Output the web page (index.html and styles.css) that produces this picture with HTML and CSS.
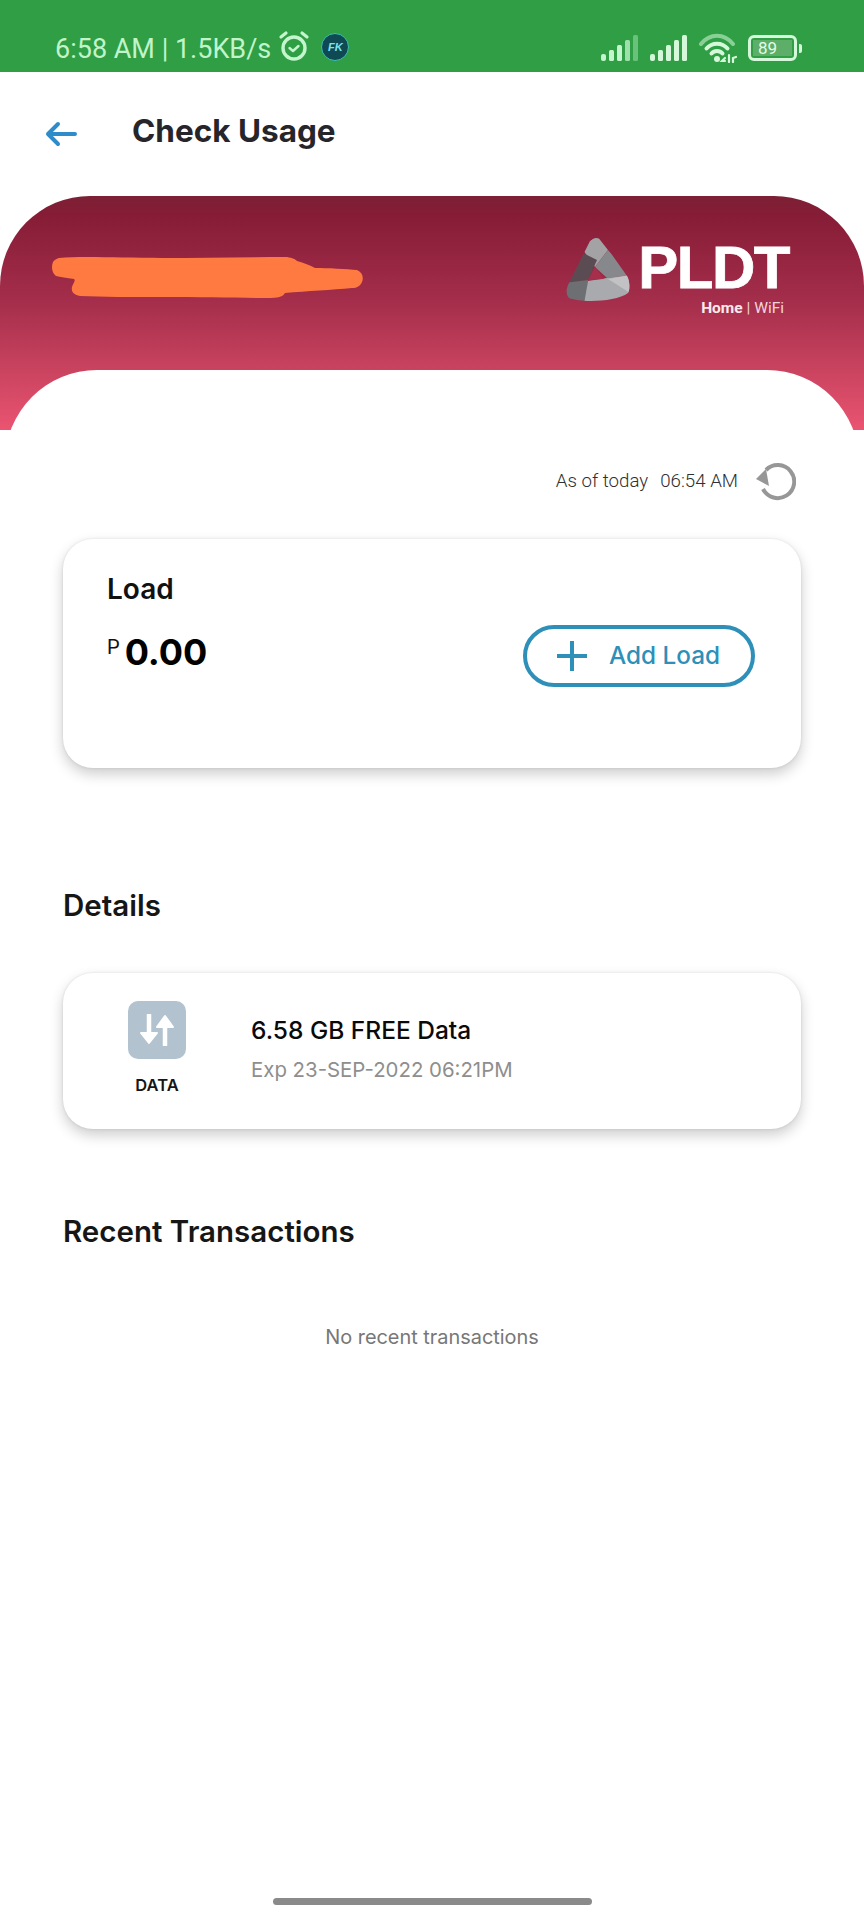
FILE: index.html
```html
<!DOCTYPE html>
<html lang="en">

<head>
  <meta charset="UTF-8" />
  <meta name="viewport" content="width=device-width, initial-scale=1.0" />
  <title>Check Usage</title>
  <link rel="stylesheet" href="styles.css">
</head>

<body>
  <div class="status-bar">
    <div class="status-left">
      <span class="status-text">6:58 AM | 1.5KB/s</span>
      <svg class="alarm-icon" width="32" height="32" viewBox="0 0 32 32" fill="none" stroke="#c4f5cd" stroke-linecap="round" stroke-linejoin="round">
        <circle cx="16" cy="18" r="11" stroke-width="3.4" />
        <path d="M11.5 18l3.5 3 5.500-5" stroke-width="2.400" />
        <path d="M3 7l5-4M29 7l-5-4" stroke-width="3.200" />
      </svg>
      <div class="fk-badge">FK</div>
    </div>
    <div class="status-right">
      <svg width="38" height="26" viewBox="0 0 38 26" fill="#c4f5cd">
        <rect x="0" y="19" width="5" height="7" rx="2" />
        <rect x="8" y="15" width="5" height="11" rx="1.500" />
        <rect x="16" y="10" width="5" height="16" rx="1.500" />
        <rect x="24" y="5" width="5" height="21" rx="1.500" opacity="0.75" />
        <rect x="32" y="0" width="5" height="26" rx="1.500" opacity="0.4" />
      </svg>
      <svg width="38" height="26" viewBox="0 0 38 26" fill="#d5f8da">
        <rect x="0" y="19" width="5" height="7" rx="2" />
        <rect x="8" y="15" width="5" height="11" rx="1.500" />
        <rect x="16" y="10" width="5" height="16" rx="1.500" />
        <rect x="24" y="5" width="5" height="21" rx="1.500" />
        <rect x="32" y="0" width="5" height="26" rx="1.500" />
      </svg>
      <svg width="38" height="30" viewBox="0 0 38 30" fill="none" stroke="#d5f8da" stroke-linecap="round">
        <path d="M2 11C11 0 25 0 34 11" stroke-width="4" opacity="0.55" />
        <path d="M7.500 15.500C13 9 23 9 28.500 15.500" stroke-width="4" />
        <path d="M12.500 20.500C15.500 17 20.500 17 23.500 20.500" stroke-width="4" />
        <circle cx="18" cy="26" r="3" fill="#d5f8da" stroke="none" />
        <path d="M26 25l-3 3h3M30 22v7M34 29v-4l3-1" stroke-width="2.200" />
      </svg>
      <div class="battery">
        <div class="battery-body">
          <div class="battery-level">89</div>
        </div>
        <div class="battery-cap"></div>
      </div>
    </div>
  </div>

  <div class="top-bar">
    <svg class="back-icon" width="32" height="26" viewBox="0 0 32 26" fill="none" stroke="#2e8cc8" stroke-width="4" stroke-linecap="round" stroke-linejoin="round">
      <path d="M30 13H3M13 3L3 13l10 10" />
    </svg>
    <h1 class="page-title">Check Usage</h1>
  </div>

  <div class="banner">
    <!-- name is scribbled over in the screenshot -->
    <svg class="scribble" width="312" height="42" viewBox="0 0 312 42">
      <path fill="#ff7a41" d="M7 1C30 -1 70 1 110 1C150 1 190 0 235 0C241 1 243 2 245 4C252 6 258 8 263 11C275 11 295 12 305 13C310 15 312 20 310 25C308 29 305 31 300 31C280 33 255 34 233 36C231 40 226 41 215 41C190 41 150 40 110 40C80 40 50 40 28 39C22 38 19 35 20 30C21 26 24 24 22 22C15 21 8 20 4 19C0 16 -1 10 1 5C2 3 4 2 7 1Z" />
    </svg>
    <div class="pldt-logo">
      <svg width="66" height="66" viewBox="0 0 66 66">
        <clipPath id="logoShape">
          <path d="M30 0C33 0 35 1 37 4L61 38C64 43 64 52 62 55C50 64 15 65 3 60C0 57 0 52 2 47L24 3C26 1 28 0 30 0Z" />
        </clipPath>
        <g clip-path="url(#logoShape)">
          <path fill="#a3a3a6" d="M15 9L31 -2L42 12L29 29Z" />
          <path fill="#87888c" d="M42 12L66 37L41 40L29 29Z" />
          <path fill="#5a4c52" d="M15 14L31 22L22 42L-2 46L8 20Z" />
          <path fill="#6d6f73" d="M-2 45L22 42L20 66L-2 62Z" />
          <path fill="#a9aaad" d="M22 43L41 40L66 37L66 66L18 66Z" />
          <path fill="#c2c1c3" d="M42 41L64 37L64 55Z" />
          <path fill="#a62f4c" d="M29 29L38 41L22 42Z" />
        </g>
      </svg>
      <div class="pldt-text">
        <div class="pldt-name">PLDT</div>
        <div class="pldt-sub"><b>Home</b> | WiFi</div>
      </div>
    </div>
  </div>

  <div class="content">
    <div class="as-of">
      <span>As of today</span>
      <span class="as-of-time">06:54 AM</span>
      <svg class="refresh-icon" width="44" height="40" viewBox="0 0 44 40" fill="none" stroke="#979797" stroke-width="4">
        <path d="M14 9A16.500 16.500 0 1 1 11 28" />
        <path d="M4 18L14 8L17 25Z" fill="#979797" stroke="none" />
      </svg>
    </div>

    <div class="card load-card">
      <div class="load-left">
        <div class="load-label">Load</div>
        <div class="load-amount"><span class="peso">P</span><span class="amount">0.00</span></div>
      </div>
      <div class="add-load">
        <svg width="32" height="32" viewBox="0 0 32 32" stroke="#2e8fb8" stroke-width="4">
          <path d="M16 1v30M1 16h30" />
        </svg>
        <span>Add Load</span>
      </div>
    </div>

    <h2 class="section-title details-title">Details</h2>

    <div class="card data-card">
      <div class="data-type">
        <div class="data-icon">
          <svg width="36" height="32" viewBox="0 0 36 32" fill="#fff" stroke="#fff" stroke-linejoin="round">
            <path d="M10 1v20" stroke-width="4.500" stroke-linecap="round" fill="none" />
            <path d="M2 19h16l-8 10z" stroke-width="2" />
            <path d="M26 31V11" stroke-width="4.500" stroke-linecap="round" fill="none" />
            <path d="M18 13h16L26 2z" stroke-width="2" />
          </svg>
        </div>
        <div class="data-label">DATA</div>
      </div>
      <div class="data-info">
        <div class="data-name">6.58 GB FREE Data</div>
        <div class="data-exp">Exp 23-SEP-2022 06:21PM</div>
      </div>
    </div>

    <h2 class="section-title recent-title">Recent Transactions</h2>
    <p class="no-recent">No recent transactions</p>
  </div>

  <div class="home-bar"></div>
</body>

</html>
```

FILE: styles.css
```css
html,
body {
  height: 100%;
}

body {
  font-family: 'Inter', sans-serif;
  margin: 0;
  padding: 0;
  background-color: #fff;
  display: flex;
  flex-direction: column;
  overflow: hidden;
}

/* status bar */
.status-bar {
  height: 72px;
  background-color: #2f9e44;
  display: flex;
  justify-content: space-between;
  align-items: center;
  padding: 22px 62px 0 55px;
  box-sizing: border-box;
  flex-shrink: 0;
}

.status-left {
  display: flex;
  align-items: center;
  padding-top: 3px;
}

.status-text {
  font-family: 'Roboto', sans-serif;
  font-size: 27px;
  color: #c0f4ca;
  white-space: nowrap;
}

.alarm-icon {
  margin-left: 7px;
  margin-top: -5px;
}

.fk-badge {
  width: 28px;
  height: 28px;
  margin-left: 11px;
  margin-top: -4px;
  border-radius: 50%;
  background-color: #0f4a54;
  border: 1px solid #3cc0b0;
  box-sizing: border-box;
  color: #7fe3ee;
  font-family: 'Liberation Sans', sans-serif;
  font-size: 11px;
  font-weight: bold;
  font-style: italic;
  display: flex;
  align-items: center;
  justify-content: center;
}

.status-right {
  display: flex;
  align-items: center;
  gap: 11px;
  margin-top: 2px;
}

.battery {
  display: flex;
  align-items: center;
  gap: 2px;
}

.battery-body {
  width: 49px;
  height: 26px;
  border: 3px solid #d5f8da;
  border-radius: 6px;
  box-sizing: border-box;
  padding: 2px;
}

.battery-level {
  width: 34px;
  height: 100%;
  padding-left: 5px;
  background-color: #5cae68;
  color: #e3fbe6;
  font-family: 'Roboto', sans-serif;
  font-size: 17px;
  line-height: 16px;
}

.battery-cap {
  width: 3px;
  height: 9px;
  background-color: #d5f8da;
  border-radius: 0 2px 2px 0;
}

/* title row */
.top-bar {
  height: 124px;
  display: flex;
  align-items: center;
  padding: 0 0 7px 45px;
  box-sizing: border-box;
  flex-shrink: 0;
}

.back-icon {
  margin-top: 6px;
}

.page-title {
  margin: 0 0 0 55px;
  font-size: 31.500px;
  font-weight: 700;
  color: #26262a;
}

/* banner */
.banner {
  height: 234px;
  position: relative;
  overflow: hidden;
  border-radius: 90px 90px 0 0;
  background: linear-gradient(#7c2035 0%, #861c36 8%, #a42e4b 45%, #c9435f 74%, #ea5471 100%);
  display: flex;
  justify-content: space-between;
  padding: 42px 75px 0 52px;
  box-sizing: border-box;
  flex-shrink: 0;
}

/* white bite at the bottom of the banner */
.banner::after {
  content: "";
  position: absolute;
  left: 5px;
  right: 5px;
  top: 174px;
  height: 200px;
  background-color: #fff;
  border-radius: 92px 92px 0 0;
}

.scribble {
  margin-top: 19px;
}

.pldt-logo {
  display: flex;
  gap: 6px;
}

.pldt-text {
  display: flex;
  flex-direction: column;
  align-items: flex-end;
}

.pldt-name {
  font-family: 'Liberation Sans', sans-serif;
  font-size: 60px;
  font-weight: 700;
  letter-spacing: -1.500px;
  line-height: 60px;
  color: #fff;
  -webkit-text-stroke: 0.8px #fff;
}

.pldt-sub {
  margin-top: 1px;
  margin-right: 5px;
  font-family: 'Roboto', sans-serif;
  font-size: 15.500px;
  line-height: 18px;
  color: #f3d4da;
}

.pldt-sub b {
  color: #fbe9ec;
}

/* main content */
.content {
  flex: 1;
  padding: 0 63px;
}

.as-of {
  display: flex;
  justify-content: flex-end;
  align-items: center;
  height: 40px;
  margin-top: 31px;
  font-family: 'Roboto', sans-serif;
  font-size: 18.700px;
  font-weight: 300;
  color: #303030;
}

.as-of-time {
  margin-left: 12px;
}

.refresh-icon {
  margin-left: 14px;
  margin-right: 5px;
}

.card {
  background-color: #fff;
  border-radius: 30px;
  box-shadow: 0 6px 14px rgba(0, 0, 0, 0.2), 0 0 3px rgba(0, 0, 0, 0.1);
  display: flex;
  box-sizing: border-box;
}

.load-card {
  height: 229px;
  margin-top: 38px;
  padding: 32px 46px 0 44px;
  justify-content: space-between;
  align-items: flex-start;
}

.load-label {
  font-size: 28px;
  font-weight: 600;
  color: #111;
  line-height: 36px;
}

.load-amount {
  display: flex;
  margin-top: 22px;
}

.peso {
  font-family: 'Roboto', sans-serif;
  font-size: 20px;
  color: #111;
  margin-top: 6px;
  margin-right: 5px;
}

.amount {
  font-size: 36px;
  font-weight: 700;
  color: #000;
  line-height: 46px;
}

.add-load {
  width: 232px;
  height: 62px;
  margin-top: 54px;
  border: 4px solid #2e8fb8;
  border-radius: 31px;
  box-sizing: border-box;
  display: flex;
  align-items: center;
  padding-left: 29px;
  gap: 21px;
  color: #2e8fb8;
  font-size: 24.300px;
  font-weight: 500;
}

.add-load span {
  margin-top: -3px;
}

.section-title {
  margin: 0;
  font-size: 29.500px;
  font-weight: 600;
  color: #161616;
  line-height: 36px;
}

.details-title {
  margin-top: 119px;
}

.data-card {
  height: 156px;
  margin-top: 50px;
  align-items: flex-start;
}

.data-type {
  width: 188px;
  padding-top: 28px;
  display: flex;
  flex-direction: column;
  align-items: center;
}

.data-icon {
  width: 58px;
  height: 58px;
  border-radius: 10px;
  background-color: #b2c3cf;
  display: flex;
  align-items: center;
  justify-content: center;
}

.data-label {
  margin-top: 16px;
  font-size: 16.500px;
  font-weight: 600;
  color: #161616;
  line-height: 20px;
}

.data-info {
  padding-top: 41px;
}

.data-name {
  font-size: 24.500px;
  font-weight: 500;
  color: #0a0a0a;
  line-height: 32px;
}

.data-exp {
  margin-top: 9px;
  font-size: 20.400px;
  color: #8e8e8e;
  line-height: 30px;
}

.recent-title {
  margin-top: 84px;
}

.no-recent {
  margin: 75px 0 0;
  text-align: center;
  font-size: 19.900px;
  color: #777;
  line-height: 26px;
}

.home-bar {
  width: 319px;
  height: 7px;
  margin: 0 auto 15px;
  background-color: #8a8a8a;
  border-radius: 4px;
  flex-shrink: 0;
}
```
